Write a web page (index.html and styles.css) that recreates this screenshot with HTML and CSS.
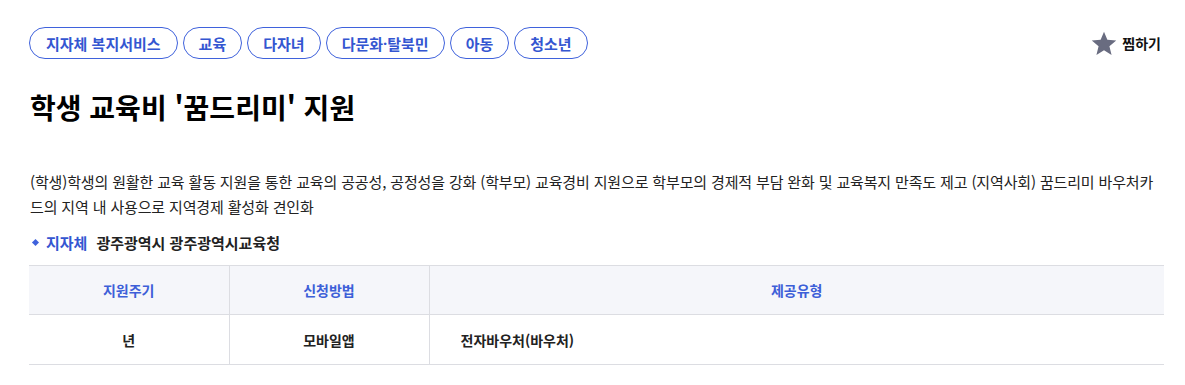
FILE: index.html
```html
<!DOCTYPE html>
<html lang="ko">
<head>
<meta charset="utf-8">
<link rel="stylesheet" href="styles.css">
</head>
<body>
<div class="page">
  <div class="top">
    <ul class="tags">
      <li class="tag">지자체 복지서비스</li>
      <li class="tag">교육</li>
      <li class="tag">다자녀</li>
      <li class="tag">다문화<span class="mid">·</span>탈북민</li>
      <li class="tag">아동</li>
      <li class="tag">청소년</li>
    </ul>
    <button class="fav">
      <svg class="star" viewBox="0 0 24 24" width="26" height="26"><path d="M12 1.5l3.1 7.6 8.2.6-6.3 5.3 2 8-7-4.4-7 4.4 2-8L.7 9.7l8.2-.6z" fill="#696c80"/></svg>
      <span>찜하기</span>
    </button>
  </div>
  <h1 class="title">학생 교육비 '꿈드리미' 지원</h1>
  <p class="desc">(학생)학생의 원활한 교육 활동 지원을 통한 교육의 공공성, 공정성을 강화 (학부모) 교육경비 지원으로 학부모의 경제적 부담 완화 및 교육복지 만족도 제고 (지역사회) 꿈드리미 바우처카드의 지역 내 사용으로 지역경제 활성화 견인화</p>
  <div class="org"><span class="dot"></span><span class="org-label">지자체</span><span class="org-name">광주광역시 광주광역시교육청</span></div>
  <table class="info">
    <thead>
      <tr><th class="c1">지원주기</th><th class="c2">신청방법</th><th>제공유형</th></tr>
    </thead>
    <tbody>
      <tr><td class="center">년</td><td class="center">모바일앱</td><td class="left">전자바우처(바우처)</td></tr>
    </tbody>
  </table>
</div>
</body>
</html>
```
FILE: styles.css
```css
* { box-sizing: border-box; }
html, body { margin: 0; padding: 0; background: #fff; }
body {
  font-family: "Noto Sans CJK KR", "Noto Sans", sans-serif;
  color: #111;
}
.page {
  padding: 27px 21px 0 29px;
}
.top {
  display: flex;
  justify-content: space-between;
  align-items: center;
}
.tags {
  display: flex;
  gap: 5px;
  list-style: none;
  margin: 0;
  padding: 0;
}
.tag {
  height: 32px;
  padding: 0 15px;
  border: 1px solid #3f62dc;
  border-radius: 16px;
  color: #3456d1;
  font-size: 15px;
  font-weight: 700;
  display: flex;
  align-items: center;
}
.tag:first-child { padding: 0 16px; }
.mid { font-family: "Noto Sans", sans-serif; }
.fav {
  display: flex;
  align-items: center;
  gap: 5px;
  background: none;
  border: 0;
  padding: 0 3px 0 0;
  font-family: inherit;
  font-size: 14px;
  font-weight: 700;
  color: #111;
}
.star { display: block; }
.title {
  margin: 28px 0 0 1px;
  font-size: 28px;
  font-weight: 700;
  line-height: 40px;
  color: #000;
}
.desc {
  margin: 42px 0 0 1px;
  font-size: 15px;
  line-height: 25px;
  color: #222;
  letter-spacing: -0.15px;
}
.org {
  display: flex;
  align-items: center;
  margin: 13px 0 0 4px;
  font-size: 15px;
  font-weight: 700;
}
.dot {
  width: 5px;
  height: 5px;
  background: #3f62dc;
  transform: rotate(45deg);
  margin-right: 8px;
}
.org-label { color: #3456d1; margin-right: 9px; }
.org-name { color: #222; }
.info {
  width: 100%;
  margin-top: 12px;
  border-collapse: collapse;
  font-size: 14px;
}
.info th, .info td {
  border-top: 1px solid #dcdde2;
  border-bottom: 1px solid #dcdde2;
  border-left: 1px solid #dcdde2;
  height: 49px;
  padding: 0;
  font-weight: 700;
}
.info th:first-child, .info td:first-child { border-left: 0; }
.info th {
  background: #f5f6fa;
  color: #3d5fd8;
  text-align: center;
}
.info .c1, .info .c2 { width: 200px; }
.info td { height: 50px; color: #222; }
.info td.center { text-align: center; }
.info td.left { text-align: left; padding-left: 31px; }
```
